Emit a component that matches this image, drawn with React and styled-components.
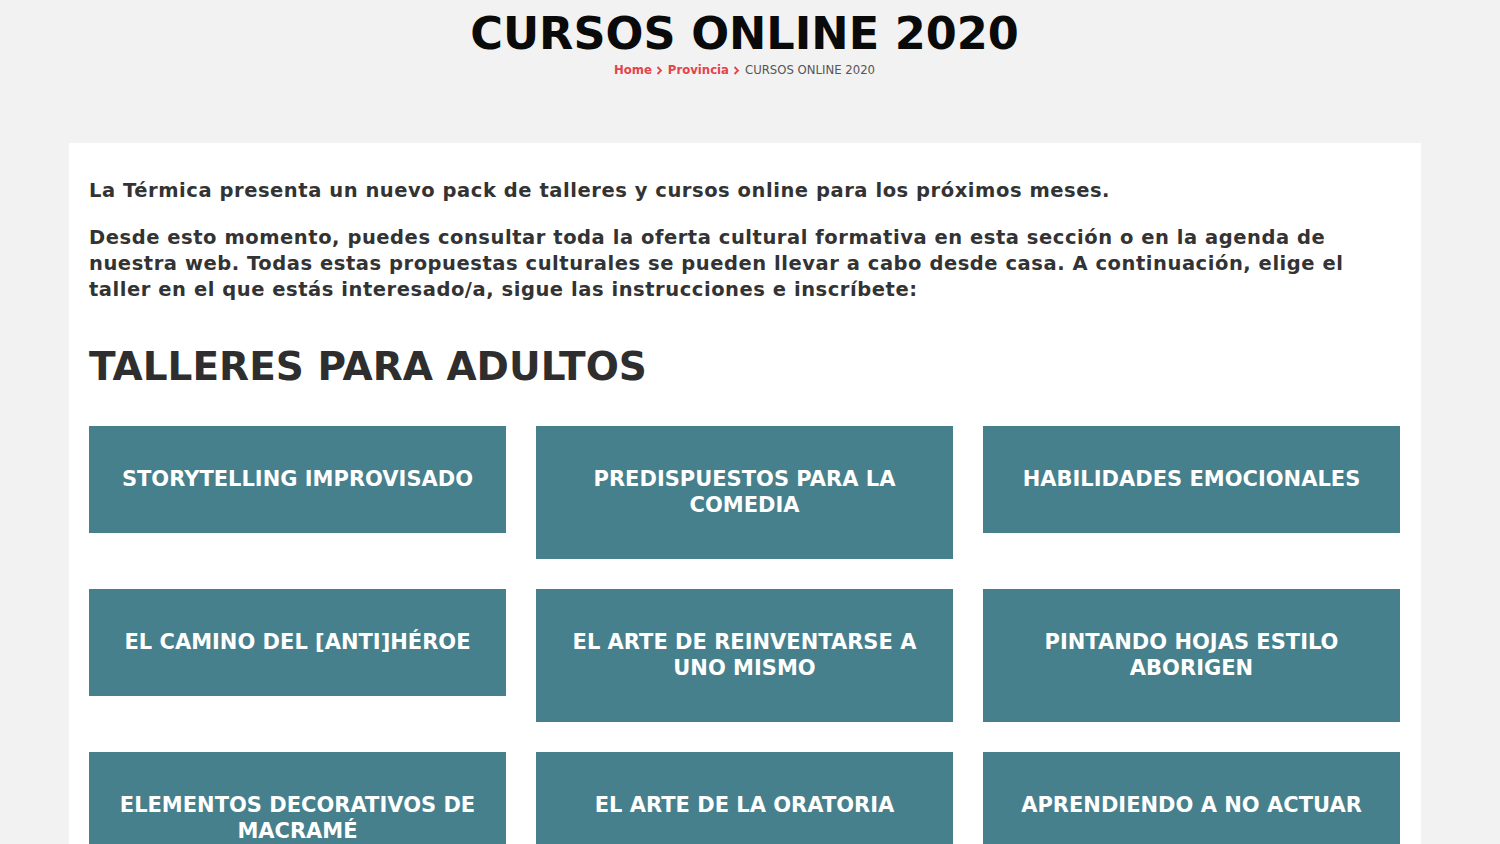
import React from "react";
import styled, { createGlobalStyle } from "styled-components";

const Global = createGlobalStyle`
  html, body { margin: 0; padding: 0; background: #f2f2f2; }
  body { font-family: "DejaVu Sans", "Noto Sans", sans-serif; }
  * { box-sizing: border-box; }
`;

const Page = styled.div`
  min-height: 844px;
  background: #f2f2f2;
  overflow: hidden;
`;

const Header = styled.header`
  display: flex;
  flex-direction: column;
  align-items: center;
  padding: 10px 11px 0 0;
  height: 143px;
`;

const Title = styled.h1`
  margin: 0;
  font-family: "DejaVu Sans", sans-serif;
  font-weight: 700;
  font-size: 44.6px;
  line-height: 48px;
  color: #0a0a0a;
`;

const Crumbs = styled.nav`
  display: flex;
  align-items: center;
  gap: 3px;
  margin-top: 4px;
  font-family: "DejaVu Sans", sans-serif;
  font-size: 11.7px;
  line-height: 16px;
`;

const CrumbLink = styled.a`
  color: #e5434b;
  font-weight: 700;
  text-decoration: none;
`;

const CrumbCurrent = styled.span`
  color: #555;
`;

const Chevron = styled.svg`
  width: 7px;
  height: 9px;
  margin: 0 2px 0 1px;
`;

const Card = styled.main`
  margin-left: 69px;
  width: 1352px;
  background: #fff;
  padding: 35px 20px 40px;
`;

const Para = styled.p`
  margin: 0 0 21px;
  font-family: "DejaVu Sans", sans-serif;
  font-weight: 700;
  font-size: 19.5px;
  letter-spacing: 0.55px;
  line-height: 26px;
  color: #333;
`;

const Heading = styled.h2`
  margin: 40px 0 35px;
  font-family: "DejaVu Sans", sans-serif;
  font-weight: 700;
  font-size: 39px;
  line-height: 48px;
  color: #2e2e2e;
`;

const Grid = styled.div`
  display: grid;
  grid-template-columns: repeat(3, 417px);
  column-gap: 30px;
  row-gap: 30px;
  align-items: start;
`;

const Course = styled.a`
  display: block;
  background: #46808c;
  color: #fff;
  text-align: center;
  text-decoration: none;
  padding: 40px 20px 41px;
  font-family: "DejaVu Sans", sans-serif;
  font-weight: 700;
  font-size: 21px;
  line-height: 26px;
  white-space: pre-line;
`;

const courses = [
  "STORYTELLING IMPROVISADO",
  "PREDISPUESTOS PARA LA\nCOMEDIA",
  "HABILIDADES EMOCIONALES",
  "EL CAMINO DEL [ANTI]HÉROE",
  "EL ARTE DE REINVENTARSE A\nUNO MISMO",
  "PINTANDO HOJAS ESTILO\nABORIGEN",
  "ELEMENTOS DECORATIVOS DE\nMACRAMÉ",
  "EL ARTE DE LA ORATORIA",
  "APRENDIENDO A NO ACTUAR",
];

const Sep = () => (
  <Chevron viewBox="0 0 7 9">
    <path d="M1.5 1 L5 4.5 L1.5 8" fill="none" stroke="#e5434b" strokeWidth="1.8" />
  </Chevron>
);

export default function App() {
  return (
    <Page>
      <Global />
      <Header>
        <Title>CURSOS ONLINE 2020</Title>
        <Crumbs>
          <CrumbLink href="#">Home</CrumbLink>
          <Sep />
          <CrumbLink href="#">Provincia</CrumbLink>
          <Sep />
          <CrumbCurrent>CURSOS ONLINE 2020</CrumbCurrent>
        </Crumbs>
      </Header>
      <Card>
        <Para>
          La Térmica presenta un nuevo pack de talleres y cursos online para los próximos meses.
        </Para>
        <Para>
          Desde esto momento, puedes consultar toda la oferta cultural formativa en esta sección o en la agenda de nuestra web. Todas estas propuestas culturales se pueden llevar a cabo desde casa. A continuación, elige el taller en el que estás interesado/a, sigue las instrucciones e inscríbete:
        </Para>
        <Heading>TALLERES PARA ADULTOS</Heading>
        <Grid>
          {courses.map((c) => (
            <Course href="#" key={c}>{c}</Course>
          ))}
        </Grid>
      </Card>
    </Page>
  );
}
